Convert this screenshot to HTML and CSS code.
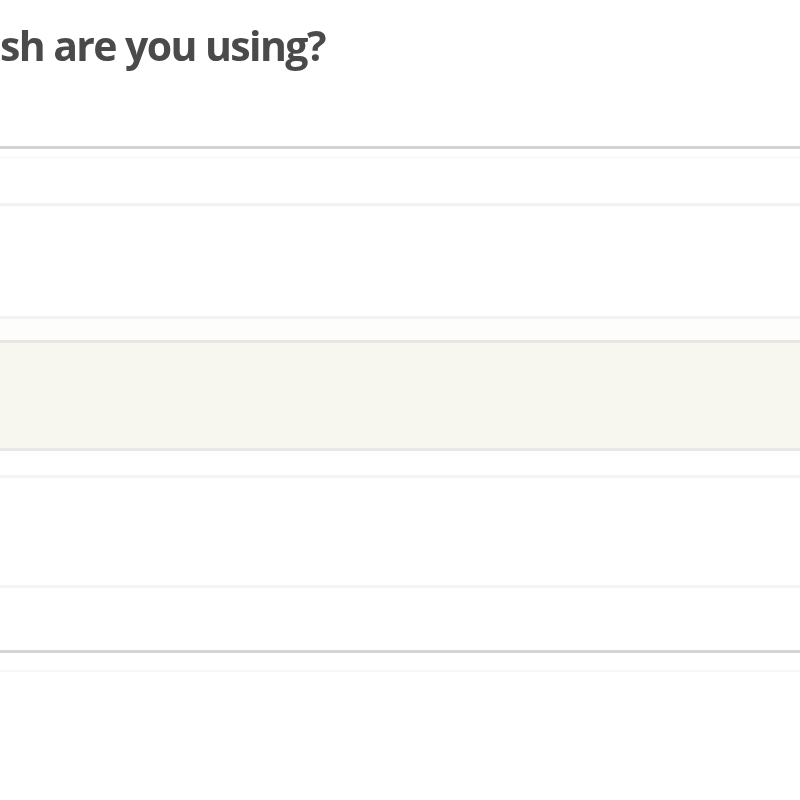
FILE: index.html
```html
<!DOCTYPE html>
<html>
<head>
<meta charset="utf-8">
<link rel="stylesheet" href="styles.css">
</head>
<body>
<div class="page">
  <h1 class="question">sh are you using?</h1>
  <div class="list">
    <div class="row row-a"></div>
    <div class="row row-b"></div>
    <div class="spacer"></div>
    <div class="row row-selected"></div>
    <div class="spacer-2"></div>
    <div class="row row-c"></div>
    <div class="row row-d"></div>
  </div>
  <div class="after"></div>
</div>
</body>
</html>
```
FILE: styles.css
```css
html, body {
  margin: 0;
  padding: 0;
  background: #ffffff;
}
.page {
  width: 800px;
  height: 800px;
  overflow: hidden;
  font-family: "Open Sans", "Liberation Sans", sans-serif;
  filter: blur(0.6px);
}
.question {
  margin: 0;
  padding: 18px 0 0 0;
  height: 127px;
  box-sizing: border-box;
  font-size: 41px;
  font-weight: 700;
  line-height: 54px;
  color: #4a4a4a;
  letter-spacing: -1.6px;
  white-space: nowrap;
}
.list {
  border-top: 3px solid #d3d3d3;
  margin-top: 19px;
}
.row-a {
  height: 54px;
  border-bottom: 3px solid #f2f2f2;
  background: linear-gradient(#ffffff 0, #ffffff 8px, #f7f7f7 8px, #f7f7f7 9px, #ffffff 9px);
}
.row-b {
  height: 110px;
  border-bottom: 3px solid #f2f2f2;
}
.spacer {
  height: 21px;
  background: #fdfdfb;
}
.row-selected {
  height: 105px;
  background: #f7f7f0;
  border-top: 3px solid #e9e7e3;
  border-bottom: 3px solid #e9e7e3;
}
.spacer-2 {
  height: 24px;
  border-bottom: 3px solid #f3f3f3;
}
.row-c {
  height: 107px;
  border-bottom: 3px solid #f3f3f3;
}
.row-d {
  height: 62px;
  border-bottom: 3px solid #d5d5d5;
}
.after {
  height: 17px;
  border-bottom: 2px solid #f6f6f6;
}
```
